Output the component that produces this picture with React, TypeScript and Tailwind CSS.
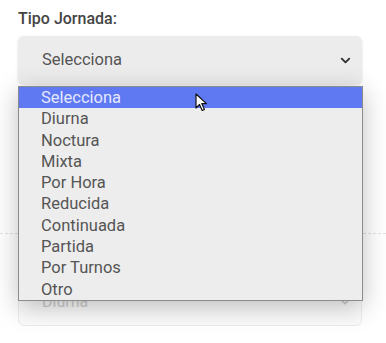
import { ChevronDown } from "lucide-react";

const opciones = [
  "Selecciona",
  "Diurna",
  "Noctura",
  "Mixta",
  "Por Hora",
  "Reducida",
  "Continuada",
  "Partida",
  "Por Turnos",
  "Otro",
];

function Cursor() {
  return (
    <svg width="14" height="20" viewBox="0 0 14 20" className="absolute left-[176px] top-[6px]">
      <path
        d="M1 1 L1 15 L4.5 11.5 L7.2 17.5 L9.4 16.5 L6.8 10.6 L11.5 10.6 Z"
        fill="#fff"
        stroke="#111"
        strokeWidth="1.2"
        strokeLinejoin="round"
      />
    </svg>
  );
}

export default function App() {
  return (
    <div className="relative h-[343px] w-[386px] overflow-hidden bg-white font-['Roboto','Liberation_Sans',sans-serif]">
      <div className="px-[18px] pt-[9px]">
        <label className="block text-[16px] font-medium leading-[20px] text-[#444]">
          Tipo Jornada:
        </label>
        <div className="mt-[7px] flex h-[48px] w-[344px] items-center justify-between rounded-[6px] bg-[#ececec] pl-[24px] pr-[9px] text-[16.5px] text-[#555] shadow-[0_1px_3px_rgba(0,0,0,0.12)]">
          <span>Selecciona</span>
          <ChevronDown size={15} strokeWidth={3} className="text-[#333]" />
        </div>

        <div className="-mx-[18px] mt-[149px] border-t border-dashed border-[#e2e2e2]" />

        <div className="mt-[44px] flex h-[48px] w-[344px] items-center justify-between rounded-[6px] border border-[#ececec] bg-[#fbfbfb] pl-[23px] pr-[9px] text-[16px] text-[#cfcfcf]">
          <span>Diurna</span>
          <ChevronDown size={14} strokeWidth={3} className="text-[#ccc]" />
        </div>
      </div>

      <ul className="absolute left-[18px] top-[86px] w-[345px] border border-[#8c8c8c] bg-[#ededed] shadow-[0_6px_24px_rgba(0,0,0,0.25)]">
        {opciones.map((op, i) => (
          <li
            key={op}
            className={
              i === 0
                ? "relative h-[21.3px] bg-[#5f79f3] pl-[22px] text-[16.5px] leading-[21.3px] text-[#e4e8ff]"
                : "h-[21.3px] pl-[22px] text-[16.5px] leading-[21.3px] text-[#555]"
            }
          >
            {op}
            {i === 0 && <Cursor />}
          </li>
        ))}
      </ul>
    </div>
  );
}
